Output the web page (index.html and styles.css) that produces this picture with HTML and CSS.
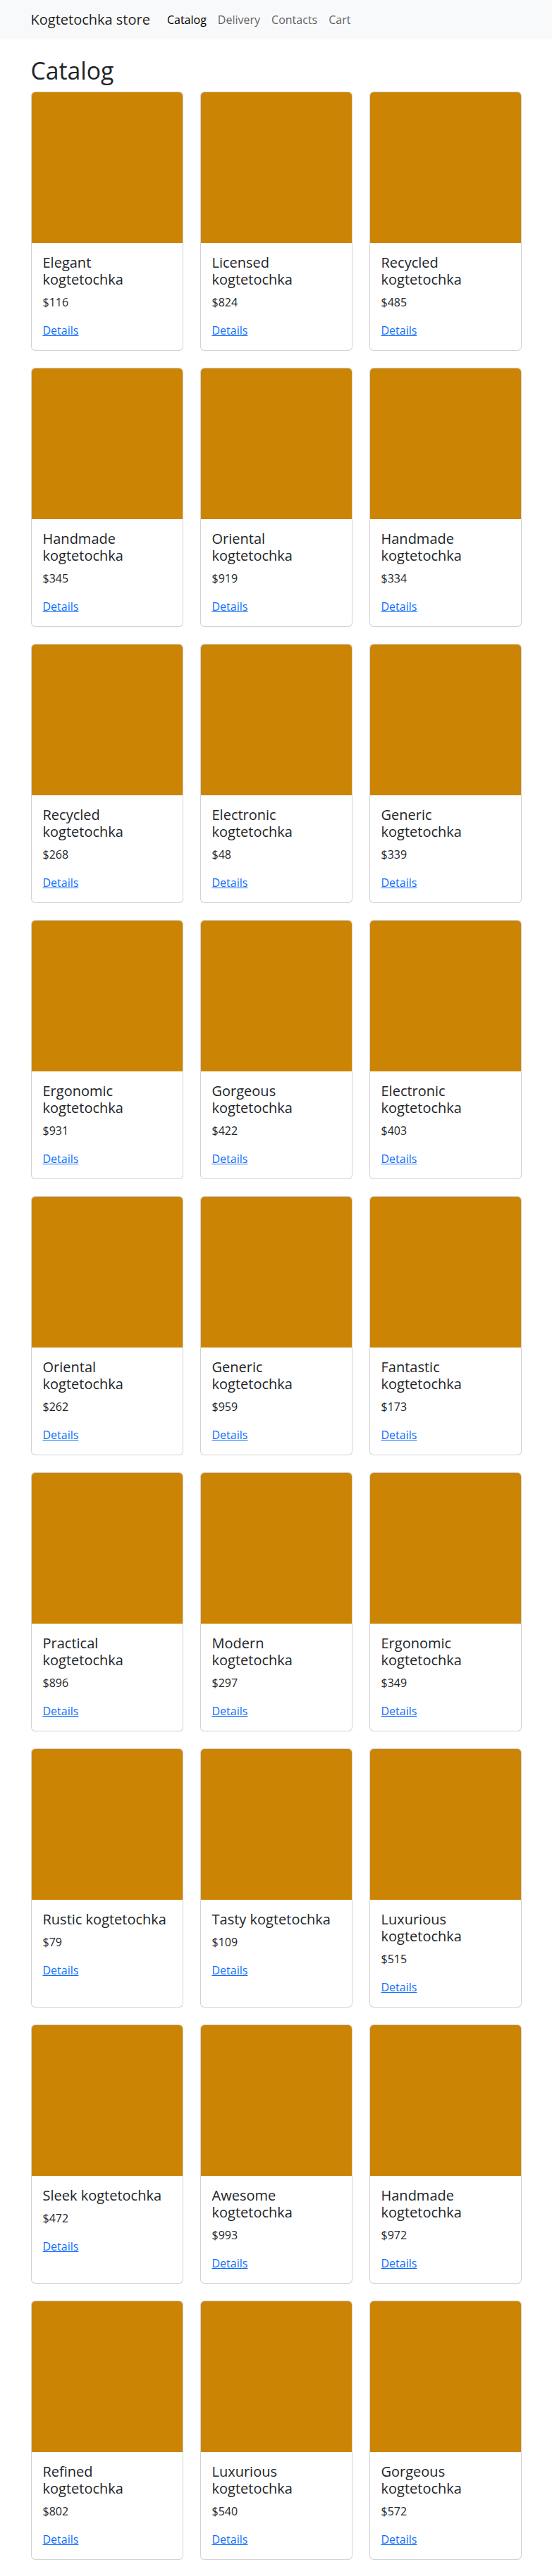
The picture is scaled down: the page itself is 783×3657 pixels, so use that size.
FILE: index.html
```html
<!DOCTYPE html>
<html lang="en">
<head>
<meta charset="utf-8">
<title>Kogtetochka store</title>
<link rel="stylesheet" href="styles.css">
</head>
<body>
<nav class="navbar">
  <div class="container nav-inner">
    <a class="brand" href="#">Kogtetochka store</a>
    <ul class="nav-links">
      <li><a class="nav-link active" href="#">Catalog</a></li>
      <li><a class="nav-link" href="#">Delivery</a></li>
      <li><a class="nav-link" href="#">Contacts</a></li>
      <li><a class="nav-link" href="#">Cart</a></li>
    </ul>
  </div>
</nav>
<main class="container main">
  <h1 class="page-title">Catalog</h1>
  <div class="grid">
    <div class="card"><div class="card-img"></div><div class="card-body"><h5 class="card-title">Elegant kogtetochka</h5><p class="card-text">$116</p><a href="#" class="link">Details</a></div></div>
    <div class="card"><div class="card-img"></div><div class="card-body"><h5 class="card-title">Licensed kogtetochka</h5><p class="card-text">$824</p><a href="#" class="link">Details</a></div></div>
    <div class="card"><div class="card-img"></div><div class="card-body"><h5 class="card-title">Recycled kogtetochka</h5><p class="card-text">$485</p><a href="#" class="link">Details</a></div></div>

    <div class="card"><div class="card-img"></div><div class="card-body"><h5 class="card-title">Handmade kogtetochka</h5><p class="card-text">$345</p><a href="#" class="link">Details</a></div></div>
    <div class="card"><div class="card-img"></div><div class="card-body"><h5 class="card-title">Oriental kogtetochka</h5><p class="card-text">$919</p><a href="#" class="link">Details</a></div></div>
    <div class="card"><div class="card-img"></div><div class="card-body"><h5 class="card-title">Handmade kogtetochka</h5><p class="card-text">$334</p><a href="#" class="link">Details</a></div></div>

    <div class="card"><div class="card-img"></div><div class="card-body"><h5 class="card-title">Recycled kogtetochka</h5><p class="card-text">$268</p><a href="#" class="link">Details</a></div></div>
    <div class="card"><div class="card-img"></div><div class="card-body"><h5 class="card-title">Electronic kogtetochka</h5><p class="card-text">$48</p><a href="#" class="link">Details</a></div></div>
    <div class="card"><div class="card-img"></div><div class="card-body"><h5 class="card-title">Generic kogtetochka</h5><p class="card-text">$339</p><a href="#" class="link">Details</a></div></div>

    <div class="card"><div class="card-img"></div><div class="card-body"><h5 class="card-title">Ergonomic kogtetochka</h5><p class="card-text">$931</p><a href="#" class="link">Details</a></div></div>
    <div class="card"><div class="card-img"></div><div class="card-body"><h5 class="card-title">Gorgeous kogtetochka</h5><p class="card-text">$422</p><a href="#" class="link">Details</a></div></div>
    <div class="card"><div class="card-img"></div><div class="card-body"><h5 class="card-title">Electronic kogtetochka</h5><p class="card-text">$403</p><a href="#" class="link">Details</a></div></div>

    <div class="card"><div class="card-img"></div><div class="card-body"><h5 class="card-title">Oriental kogtetochka</h5><p class="card-text">$262</p><a href="#" class="link">Details</a></div></div>
    <div class="card"><div class="card-img"></div><div class="card-body"><h5 class="card-title">Generic kogtetochka</h5><p class="card-text">$959</p><a href="#" class="link">Details</a></div></div>
    <div class="card"><div class="card-img"></div><div class="card-body"><h5 class="card-title">Fantastic kogtetochka</h5><p class="card-text">$173</p><a href="#" class="link">Details</a></div></div>

    <div class="card"><div class="card-img"></div><div class="card-body"><h5 class="card-title">Practical kogtetochka</h5><p class="card-text">$896</p><a href="#" class="link">Details</a></div></div>
    <div class="card"><div class="card-img"></div><div class="card-body"><h5 class="card-title">Modern kogtetochka</h5><p class="card-text">$297</p><a href="#" class="link">Details</a></div></div>
    <div class="card"><div class="card-img"></div><div class="card-body"><h5 class="card-title">Ergonomic kogtetochka</h5><p class="card-text">$349</p><a href="#" class="link">Details</a></div></div>

    <div class="card"><div class="card-img"></div><div class="card-body"><h5 class="card-title">Rustic kogtetochka</h5><p class="card-text">$79</p><a href="#" class="link">Details</a></div></div>
    <div class="card"><div class="card-img"></div><div class="card-body"><h5 class="card-title">Tasty kogtetochka</h5><p class="card-text">$109</p><a href="#" class="link">Details</a></div></div>
    <div class="card"><div class="card-img"></div><div class="card-body"><h5 class="card-title">Luxurious kogtetochka</h5><p class="card-text">$515</p><a href="#" class="link">Details</a></div></div>

    <div class="card"><div class="card-img"></div><div class="card-body"><h5 class="card-title">Sleek kogtetochka</h5><p class="card-text">$472</p><a href="#" class="link">Details</a></div></div>
    <div class="card"><div class="card-img"></div><div class="card-body"><h5 class="card-title">Awesome kogtetochka</h5><p class="card-text">$993</p><a href="#" class="link">Details</a></div></div>
    <div class="card"><div class="card-img"></div><div class="card-body"><h5 class="card-title">Handmade kogtetochka</h5><p class="card-text">$972</p><a href="#" class="link">Details</a></div></div>

    <div class="card"><div class="card-img"></div><div class="card-body"><h5 class="card-title">Refined kogtetochka</h5><p class="card-text">$802</p><a href="#" class="link">Details</a></div></div>
    <div class="card"><div class="card-img"></div><div class="card-body"><h5 class="card-title">Luxurious kogtetochka</h5><p class="card-text">$540</p><a href="#" class="link">Details</a></div></div>
    <div class="card"><div class="card-img"></div><div class="card-body"><h5 class="card-title">Gorgeous kogtetochka</h5><p class="card-text">$572</p><a href="#" class="link">Details</a></div></div>
  </div>
</main>
</body>
</html>
```
FILE: styles.css
```css
* { box-sizing: border-box; }

body {
  margin: 0;
  font-family: "Open Sans", "Noto Sans", "Liberation Sans", sans-serif;
  font-size: 16px;
  line-height: 1.5;
  color: #212529;
  background: #fff;
}

.container {
  width: 100%;
  max-width: 720px;
  margin: 0 auto;
  padding: 0 12px;
}

.navbar {
  background: #f8f9fa;
  padding: 8px 0;
}

.nav-inner {
  display: flex;
  align-items: center;
}

.brand {
  font-size: 20px;
  line-height: 30px;
  padding: 5px 0;
  margin-right: 16px;
  color: rgba(0, 0, 0, 0.9);
  text-decoration: none;
  white-space: nowrap;
}

.nav-links {
  display: flex;
  list-style: none;
  margin: 0;
  padding: 0;
}

.nav-link {
  display: block;
  padding: 8px;
  color: rgba(0, 0, 0, 0.65);
  text-decoration: none;
}

.nav-link.active {
  color: #000;
}

.main {
  margin-top: 24px;
  margin-bottom: 24px;
}

.page-title {
  font-size: 33.75px;
  font-weight: 500;
  line-height: 1.2;
  margin: 0 0 9.5px;
}

.grid {
  display: grid;
  grid-template-columns: repeat(3, 1fr);
  gap: 24px;
}

.card {
  display: flex;
  flex-direction: column;
  border: 1px solid rgba(0, 0, 0, 0.175);
  border-radius: 6px;
  background: #fff;
  overflow: hidden;
}

.card-img {
  height: 214px;
  background: #cc8404;
}

.card-body {
  padding: 16px;
  flex: 1 1 auto;
}

.card-title {
  font-size: 20px;
  font-weight: 500;
  line-height: 1.2;
  margin: 0 0 8px;
}

.card-text {
  margin: 0 0 16px;
}

.link {
  color: #0d6efd;
  text-decoration: underline;
}
```
